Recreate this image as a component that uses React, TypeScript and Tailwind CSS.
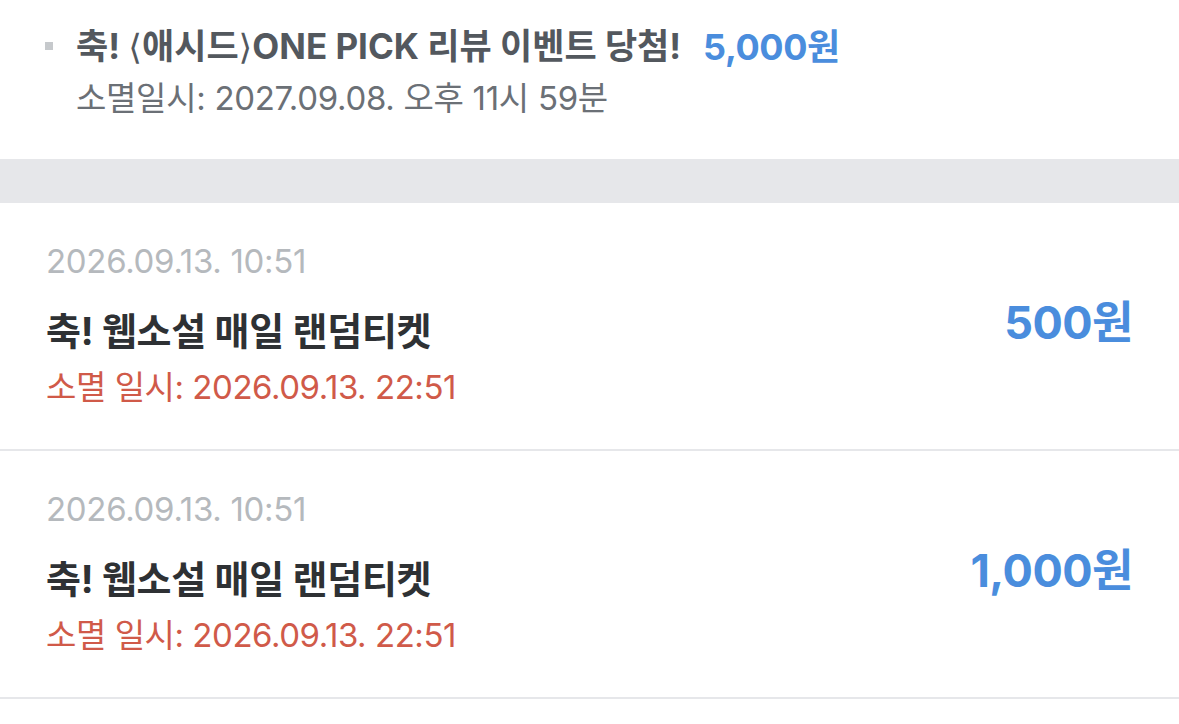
import React from "react";

const font = { fontFamily: 'Inter, "Noto Sans CJK KR", sans-serif' };
const bracket = { fontFamily: '"DejaVu Sans", sans-serif' };

const rows = [
    { date: "2026.09.13. 10:51", title: "축! 웹소설 매일 랜덤티켓", expire: "소멸 일시: 2026.09.13. 22:51", amount: "500원" },
    { date: "2026.09.13. 10:51", title: "축! 웹소설 매일 랜덤티켓", expire: "소멸 일시: 2026.09.13. 22:51", amount: "1,000원" },
];

const TicketRow = (props: { date: string, title: string, expire: string, amount: string }) => {
    return (
        <div className="flex justify-between items-center pl-[46px] pr-[46px] pt-[40px] pb-[44px] border-b-2 border-[#e6e7ea]">
            <div className="flex flex-col">
                <p className="text-[33px] leading-[36px] text-[#b5b9bd] tracking-[-0.3px]">{props.date}</p>
                <p className="mt-[30px] text-[38px] leading-[44px] font-bold text-[#2e3134] tracking-[-0.3px]">{props.title}</p>
                <p className="mt-[16px] text-[33px] leading-[36px] text-[#d05a49] tracking-[-0.45px]">{props.expire}</p>
            </div>
            <p className="text-[45px] leading-[44px] font-bold text-[#4a8ddd] tracking-[-0.5px] mb-[2px]">{props.amount}</p>
        </div>
    );
};

export default function App() {
    return (
        <div className="w-[1179px] h-[724px] bg-white overflow-hidden" style={font}>
            <div className="pt-[26px] pb-[43px] pl-[45px] flex">
                <span className="w-[8px] h-[8px] bg-[#c6c9cc] mt-[16px]"/>
                <div className="ml-[23px] flex flex-col">
                    <div className="flex items-center">
                        <p className="text-[35px] leading-[40px] font-bold text-[#53585e]">
                            축! <span style={bracket} className="font-normal">⟨</span>애시드<span style={bracket} className="font-normal">⟩</span>ONE PICK 리뷰 이벤트 당첨!
                        </p>
                        <p className="ml-[22px] text-[36px] leading-[40px] font-bold text-[#4a8ddd] tracking-[-0.4px]">5,000원</p>
                    </div>
                    <p className="mt-[13px] text-[33px] leading-[36px] text-[#6b7076] tracking-[-0.3px]">소멸일시: 2027.09.08. 오후 11시 59분</p>
                </div>
            </div>
            <div className="h-[44px] bg-[#e6e7ea]"/>
            {rows.map((r, i) => (
                <TicketRow key={i} {...r}/>
            ))}
        </div>
    );
}
